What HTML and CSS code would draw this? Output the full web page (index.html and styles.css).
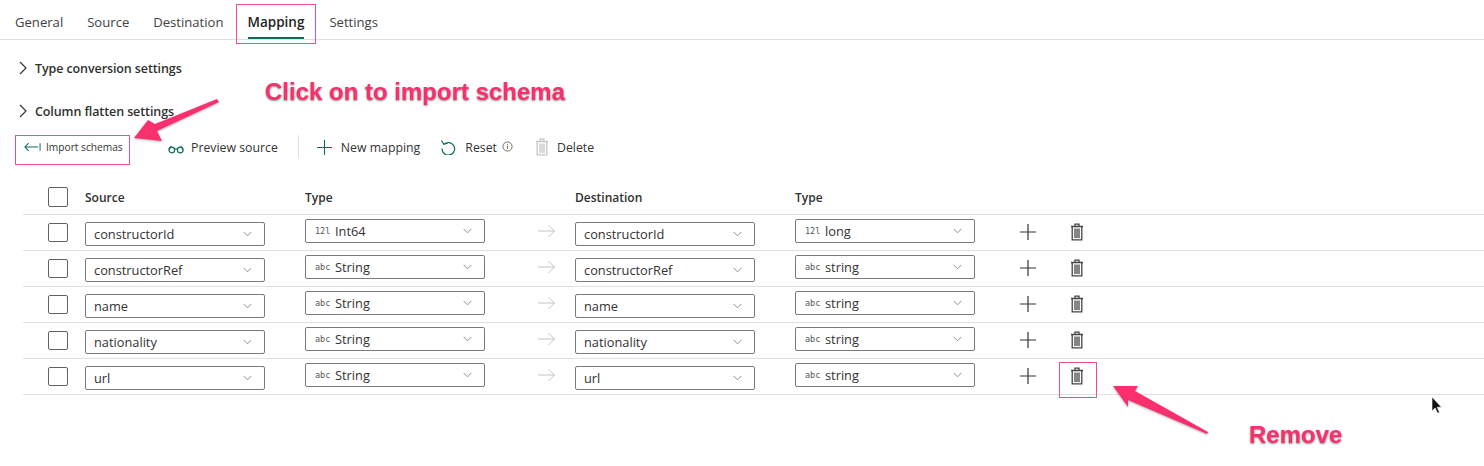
FILE: index.html
```html
<!DOCTYPE html>
<html lang="en">
<head>
<meta charset="utf-8">
<title>Mapping</title>
<link rel="stylesheet" href="styles.css">
</head>
<body>
<svg class="defs" width="0" height="0" aria-hidden="true">
  <defs>
    <symbol id="chev" viewBox="0 0 10 6"><path d="M.7.7 5 5l4.3-4.3" fill="none" stroke="#777" stroke-width=".9"/></symbol>
    <symbol id="caret" viewBox="0 0 8 14"><path d="M1 1l6 6-6 6" fill="none" stroke="#333" stroke-width="1.2"/></symbol>
    <symbol id="plus" viewBox="0 0 16 16"><path d="M8 0v16M0 8h16" fill="none" stroke="currentColor" stroke-width="1.2"/></symbol>
    <symbol id="trash" viewBox="0 0 14 18"><path d="M1 3.500h12M5 3.500V1.200h4v2.300M2.200 3.500v13.300h9.600V3.500" fill="none" stroke="currentColor" stroke-width="1.300"/><rect x="4" y="5.500" width="6" height="9.600" fill="currentColor" opacity=".65"/></symbol>
    <symbol id="arrow" viewBox="0 0 18 14"><path d="M0 7h16.600M10.500 1l6 6-6 6" fill="none" stroke="#c4c4c4" stroke-width="1"/></symbol>
  </defs>
</svg>

<nav class="tabs">
  <span class="tab">General</span>
  <span class="tab">Source</span>
  <span class="tab">Destination</span>
  <span class="tab active">Mapping</span>
  <span class="tab">Settings</span>
</nav>

<section class="expanders">
  <div class="expander"><svg class="caret"><use href="#caret"/></svg><strong>Type conversion settings</strong></div>
  <div class="expander"><svg class="caret"><use href="#caret"/></svg><strong>Column flatten settings</strong></div>
</section>

<div class="toolbar">
  <button class="tool import">
    <svg class="ic-import" viewBox="0 0 18 10"><path d="M17 1v8M15 5H1M5 1 1 5l4 4" fill="none" stroke="#0f6d5f" stroke-width="1.100"/></svg>
    Import schemas
  </button>
  <button class="tool preview">
    <svg class="ic-glasses" viewBox="0 0 17 10"><circle cx="4" cy="6" r="3" fill="none" stroke="#0f6d5f" stroke-width="1.300"/><circle cx="13" cy="6" r="3" fill="none" stroke="#0f6d5f" stroke-width="1.300"/><path d="M7 5.500c1-.8 2-.8 3 0M1 6l2.500-4.500M16 6l-2.500-4.500" fill="none" stroke="#0f6d5f" stroke-width="1.100"/></svg>
    Preview source
  </button>
  <span class="divider"></span>
  <button class="tool newmap"><svg class="ic-plus"><use href="#plus"/></svg>New mapping</button>
  <button class="tool reset">
    <svg class="ic-reset" viewBox="0 0 16 16"><path d="M4 5.200A6.300 6.300 0 1 1 2 9.600M1.500 1.500l2.300 3.900 3.900-1.200" fill="none" stroke="#0f6d5f" stroke-width="1.200"/></svg>
    Reset
    <svg class="ic-info" viewBox="0 0 12 12"><circle cx="6" cy="6" r="5" fill="none" stroke="#555" stroke-width=".9"/><path d="M6 5.200v3.600M6 3.200v1" stroke="#555" stroke-width=".9"/></svg>
  </button>
  <button class="tool delete"><svg class="ic-del"><use href="#trash"/></svg>Delete</button>
</div>

<div class="table">
  <div class="row head">
    <span class="check"></span>
    <b class="col-source">Source</b>
    <b class="col-type">Type</b>
    <b class="col-dest">Destination</b>
    <b class="col-type2">Type</b>
  </div>

  <div class="row">
    <span class="check"></span>
    <span class="select low col-source">constructorId<svg class="chev"><use href="#chev"/></svg></span>
    <span class="select col-type"><i class="tag num">12l</i>Int64<svg class="chev"><use href="#chev"/></svg></span>
    <svg class="map-arrow"><use href="#arrow"/></svg>
    <span class="select low col-dest">constructorId<svg class="chev"><use href="#chev"/></svg></span>
    <span class="select col-type2"><i class="tag num">12l</i>long<svg class="chev"><use href="#chev"/></svg></span>
    <svg class="add"><use href="#plus"/></svg>
    <svg class="bin"><use href="#trash"/></svg>
  </div>

  <div class="row">
    <span class="check"></span>
    <span class="select low col-source">constructorRef<svg class="chev"><use href="#chev"/></svg></span>
    <span class="select col-type"><i class="tag">abc</i>String<svg class="chev"><use href="#chev"/></svg></span>
    <svg class="map-arrow"><use href="#arrow"/></svg>
    <span class="select low col-dest">constructorRef<svg class="chev"><use href="#chev"/></svg></span>
    <span class="select col-type2"><i class="tag">abc</i>string<svg class="chev"><use href="#chev"/></svg></span>
    <svg class="add"><use href="#plus"/></svg>
    <svg class="bin"><use href="#trash"/></svg>
  </div>

  <div class="row">
    <span class="check"></span>
    <span class="select low col-source">name<svg class="chev"><use href="#chev"/></svg></span>
    <span class="select col-type"><i class="tag">abc</i>String<svg class="chev"><use href="#chev"/></svg></span>
    <svg class="map-arrow"><use href="#arrow"/></svg>
    <span class="select low col-dest">name<svg class="chev"><use href="#chev"/></svg></span>
    <span class="select col-type2"><i class="tag">abc</i>string<svg class="chev"><use href="#chev"/></svg></span>
    <svg class="add"><use href="#plus"/></svg>
    <svg class="bin"><use href="#trash"/></svg>
  </div>

  <div class="row">
    <span class="check"></span>
    <span class="select low col-source">nationality<svg class="chev"><use href="#chev"/></svg></span>
    <span class="select col-type"><i class="tag">abc</i>String<svg class="chev"><use href="#chev"/></svg></span>
    <svg class="map-arrow"><use href="#arrow"/></svg>
    <span class="select low col-dest">nationality<svg class="chev"><use href="#chev"/></svg></span>
    <span class="select col-type2"><i class="tag">abc</i>string<svg class="chev"><use href="#chev"/></svg></span>
    <svg class="add"><use href="#plus"/></svg>
    <svg class="bin"><use href="#trash"/></svg>
  </div>

  <div class="row">
    <span class="check"></span>
    <span class="select low col-source">url<svg class="chev"><use href="#chev"/></svg></span>
    <span class="select col-type"><i class="tag">abc</i>String<svg class="chev"><use href="#chev"/></svg></span>
    <svg class="map-arrow"><use href="#arrow"/></svg>
    <span class="select low col-dest">url<svg class="chev"><use href="#chev"/></svg></span>
    <span class="select col-type2"><i class="tag">abc</i>string<svg class="chev"><use href="#chev"/></svg></span>
    <svg class="add"><use href="#plus"/></svg>
    <svg class="bin"><use href="#trash"/></svg>
  </div>
</div>

<!-- annotations painted over the screenshot -->
<span class="mark mark-tab"></span>
<span class="mark mark-import"></span>
<span class="mark mark-bin"></span>
<span class="note note-import">Click on to import schema</span>
<span class="note note-remove">Remove</span>
<svg class="overlay" viewBox="0 0 1484 466">
  <path class="pointer" d="M219 102 217 99 155 124 148 120 134 138 162 141 157 131Z"/>
  <path class="pointer" d="M1113 386 1138 386 1135 391 1208 432 1207 434 1128 400 1128 407Z"/>
  <path class="cursor" d="M1432 397v14l3.200-3 2.300 5.200 2-.9-2.300-5.100h4.300Z"/>
</svg>
</body>
</html>
```
FILE: styles.css
```css
* { box-sizing: border-box; }
html, body { margin: 0; padding: 0; }
body {
  width: 1484px;
  height: 466px;
  overflow: hidden;
  background: #fff;
  color: #242424;
  font-family: "Open Sans", "Noto Sans", sans-serif;
  font-size: 13px;
  position: relative;
}
.defs { position: absolute; }

/* tabs */
.tabs {
  display: flex;
  gap: 24px;
  height: 40px;
  padding-left: 15px;
  border-bottom: 1px solid #e0e0e0;
  font-size: 13.100px;
}
.tab {
  line-height: 44px;
  color: #424242;
  height: 39px;
  white-space: nowrap;
}
.tab.active {
  color: #242424;
  font-weight: 600;
  font-size: 13.500px;
  position: relative;
  margin-right: 1px;
}
.tab.active::after {
  content: "";
  position: absolute;
  left: 0;
  right: 0;
  bottom: 0;
  height: 2px;
  background: #0f6d5f;
}

/* expanders */
.expanders {
  display: flex;
  flex-direction: column;
  gap: 25px;
  padding: 19px 0 0 19px;
}
.expander {
  display: flex;
  align-items: center;
  height: 18px;
  font-size: 12.500px;
  letter-spacing: -.1px;
}
.expander strong { font-weight: 600; color: #303030; }
.caret { width: 8px; height: 14px; margin-right: 8px; }

/* toolbar */
.toolbar {
  display: flex;
  align-items: center;
  height: 36px;
  margin-top: 9px;
  padding-left: 16px;
}
.tool {
  display: flex;
  align-items: center;
  border: 0;
  background: none;
  padding: 0;
  font: inherit;
  font-size: 12.300px;
  color: #333;
  white-space: nowrap;
}
.import { width: 108px; font-size: 10.200px; padding-left: 8px; }
.ic-import { width: 17px; height: 10px; margin-right: 5px; }
.preview { margin-left: 44px; }
.ic-glasses { width: 16px; height: 10px; margin-right: 7px; margin-top: 3px; }
.divider { width: 1px; height: 24px; background: #e0e0e0; margin: 0 18px 0 20px; }
.ic-plus { width: 15px; height: 15px; color: #0f6d5f; margin-right: 9px; }
.newmap { margin-right: 20px; }
.ic-reset { width: 16px; height: 16px; margin-right: 9px; }
.ic-info { width: 11px; height: 11px; margin: -2px 0 0 5px; }
.reset { margin-right: 22px; }
.ic-del { width: 14px; height: 18px; color: #c6c6c6; margin-right: 8px; }

/* table */
.table { margin: 14px 0 0 23px; }
.row {
  display: grid;
  grid-template-columns: 25px 20px 17px 180px 40px 180px 90px 180px 40px 180px 45px 16px 33px 16px;
  align-items: center;
  height: 36px;
  border-bottom: 1px solid #e0e0e0;
  color: #333;
}
.row > :nth-child(1) { grid-column: 2; }
.col-source { grid-column: 4; }
.col-type { grid-column: 6; }
.map-arrow { grid-column: 7; justify-self: start; width: 18px; height: 14px; margin: -3px 0 0 53px; }
.col-dest { grid-column: 8; }
.col-type2 { grid-column: 10; }
.add { grid-column: 12; width: 16px; height: 16px; color: #333; margin-top: -2px; }
.bin { grid-column: 14; width: 14px; height: 18px; color: #444; justify-self: center; margin-top: -1px; }
.head b { font-size: 12px; font-weight: 600; color: #303030; margin-top: 2px; }
.check {
  display: block;
  width: 20px;
  height: 20px;
  border: 1px solid #616161;
  border-radius: 2px;
  background: #fff;
}
.row:not(.head) .check { height: 19px; width: 20px; margin-top: -1px; }
.select {
  display: flex;
  align-items: center;
  height: 24px;
  padding: 0 12px 0 30px;
  border: 1px solid #7a7a7a;
  border-radius: 2px;
  margin-top: -4px;
  font-size: 12.800px;
  color: #333;
  white-space: nowrap;
}
.select.low { padding-left: 8px; margin-top: 3px; }
.tag {
  font-family: "DejaVu Sans Mono", monospace;
  font-style: normal;
  font-size: 8.500px;
  color: #555;
  width: 20px;
  margin-left: -21px;
}
.chev { width: 9px; height: 6px; margin-left: auto; }

/* annotations */
.mark {
  position: absolute;
  border: 1px solid #f0508a;
}
.mark-tab { left: 236px; top: 4px; width: 80px; height: 40px; }
.mark-import { left: 15px; top: 135px; width: 115px; height: 30px; }
.mark-bin { left: 1059px; top: 362px; width: 38px; height: 36px; }
.note {
  position: absolute;
  color: #fa2f6d;
  font-family: "Liberation Sans", sans-serif;
  font-weight: 700;
  font-size: 24px;
  line-height: 28px;
  text-shadow: 0 1px 2px rgba(0,0,0,.45), 0 0 2px #fff;
  white-space: nowrap;
}
.note-import { left: 265px; top: 78px; }
.note-remove { left: 1249px; top: 421px; }
.overlay { position: absolute; left: 0; top: 0; width: 1484px; height: 466px; pointer-events: none; }
.pointer { fill: #fa2f6d; filter: drop-shadow(0 1px 1px rgba(0,0,0,.3)); }
.cursor { fill: #111; stroke: #fff; stroke-width: .6; }
```
